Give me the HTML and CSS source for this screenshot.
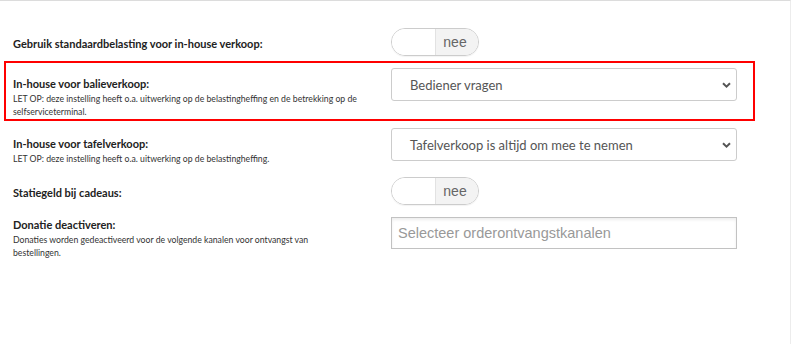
FILE: index.html
```html
<!DOCTYPE html>
<html lang="nl">
<head>
<meta charset="utf-8">
<title>Instellingen</title>
<link rel="stylesheet" href="styles.css">
</head>
<body>
<div class="page">
  <div class="settings">
    <div class="row">
      <div class="label"><div class="title">Gebruik standaardbelasting voor in-house verkoop:</div></div>
      <div class="control">
        <div class="toggle"><span class="toggle-off"></span><span class="toggle-on">nee</span></div>
      </div>
    </div>
    <div class="row highlight">
      <div class="label">
        <div class="title">In-house voor balieverkoop:</div>
        <div class="desc">LET OP: deze instelling heeft o.a. uitwerking op de belastingheffing en de betrekking op de selfserviceterminal.</div>
      </div>
      <div class="control">
        <div class="select"><span>Bediener vragen</span><svg class="chev" width="9" height="6" viewBox="0 0 9 6"><path d="M1 1.2 L4.5 4.6 L8 1.2" fill="none" stroke="#555" stroke-width="2"/></svg></div>
      </div>
    </div>
    <div class="row">
      <div class="label">
        <div class="title">In-house voor tafelverkoop:</div>
        <div class="desc">LET OP: deze instelling heeft o.a. uitwerking op de belastingheffing.</div>
      </div>
      <div class="control">
        <div class="select"><span>Tafelverkoop is altijd om mee te nemen</span><svg class="chev" width="9" height="6" viewBox="0 0 9 6"><path d="M1 1.2 L4.5 4.6 L8 1.2" fill="none" stroke="#555" stroke-width="2"/></svg></div>
      </div>
    </div>
    <div class="row">
      <div class="label"><div class="title">Statiegeld bij cadeaus:</div></div>
      <div class="control">
        <div class="toggle"><span class="toggle-off"></span><span class="toggle-on">nee</span></div>
      </div>
    </div>
    <div class="row">
      <div class="label tight">
        <div class="title">Donatie deactiveren:</div>
        <div class="desc">Donaties worden gedeactiveerd voor de volgende kanalen voor ontvangst van bestellingen.</div>
      </div>
      <div class="control">
        <input class="multi" type="text" placeholder="Selecteer orderontvangstkanalen">
      </div>
    </div>
  </div>
</div>
</body>
</html>
```
FILE: styles.css
```css
html, body {
  margin: 0;
  background: #fff;
}
body {
  font-family: Lato, "Open Sans", sans-serif;
  color: #222;
}
.page {
  width: 791px;
  height: 344px;
  box-sizing: border-box;
  border-top: 1px solid #dcdcdc;
  border-right: 1px solid #ececec;
}
.settings {
  padding: 20px 0 0 4px;
}
.row {
  display: grid;
  grid-template-columns: 378px 346px;
  width: 751px;
  box-sizing: border-box;
  border: 2px solid transparent;
  padding: 5px 16px 3px 7px;
  align-items: start;
}
.row.highlight {
  border-color: #f00;
  padding-bottom: 1px;
}
.label {
  padding-top: 8px;
}
.label.tight {
  padding-top: 0;
}
.title {
  font-weight: 700;
  font-size: 11px;
  line-height: 16px;
  color: #222;
}
.desc {
  font-size: 8.7px;
  line-height: 13px;
  color: #333;
  max-width: 345px;
}
.select {
  height: 33px;
  box-sizing: border-box;
  border: 1px solid #ccc;
  border-radius: 3px;
  display: flex;
  align-items: center;
  justify-content: space-between;
  padding: 0 5px 0 18px;
  font-size: 13px;
  color: #555;
}
.chev {
  display: block;
}
.toggle {
  width: 88px;
  height: 28px;
  box-sizing: border-box;
  border: 1px solid #ccc;
  border-radius: 14px;
  display: flex;
  overflow: hidden;
  box-shadow: 0 1px 1px rgba(0,0,0,0.05);
}
.toggle-off {
  width: 43px;
  background: #fff;
}
.toggle-on {
  flex: 1;
  background: #f3f3f3;
  border-left: 1px solid #e2e2e2;
  display: flex;
  align-items: center;
  justify-content: center;
  font-family: "Liberation Sans", Arial, sans-serif;
  font-size: 14px;
  color: #666;
  padding-right: 4px;
}
.multi {
  display: block;
  width: 346px;
  height: 32px;
  box-sizing: border-box;
  margin: 0;
  border: 1px solid #c2c2c2;
  border-radius: 0;
  box-shadow: inset 0 2px 3px rgba(0,0,0,0.07);
  padding: 0 6px;
  font-family: "Liberation Sans", Arial, sans-serif;
  font-size: 14.5px;
  color: #555;
  outline: none;
}
.multi::placeholder {
  color: #999;
}
```
